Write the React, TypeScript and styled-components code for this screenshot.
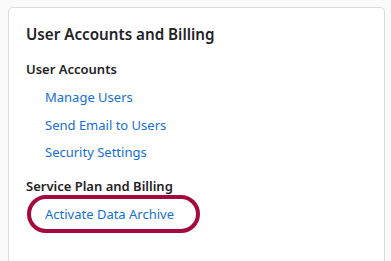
import React from "react";
import styled, { createGlobalStyle } from "styled-components";

const Global = createGlobalStyle`
  html, body { margin: 0; padding: 0; background: #fafafa; }
  body { font-family: "Noto Sans", "Open Sans", sans-serif; }
`;

const Page = styled.div`
  padding: 7px 6px 0 8px;
  height: 261px;
  box-sizing: border-box;
  overflow: hidden;
`;

const Card = styled.section`
  background: #ffffff;
  border: 1px solid #dcdcdc;
  border-radius: 5px;
  padding: 16px 17px 40px 17px;
  min-height: 280px;
  box-sizing: border-box;
`;

const Title = styled.h2`
  margin: 0 0 16px 0;
  font-size: 15.2px;
  line-height: 20px;
  font-weight: 600;
  color: #1f2226;
`;

const SectionHeading = styled.h3`
  margin: 0;
  font-size: 13px;
  line-height: 18px;
  font-weight: 600;
  color: #1f2226;
`;

const LinkList = styled.ul`
  list-style: none;
  margin: 0 0 16px 0;
  padding: 10px 0 0 19px;
  display: flex;
  flex-direction: column;
  gap: 9.5px;
`;

const LinkItem = styled.li`
  font-size: 13px;
  line-height: 18px;
`;

const Link = styled.a`
  color: #1470d2;
  text-decoration: none;
`;

const Highlight = styled.div`
  margin: 0 0 0 1px;
  width: 173px;
  height: 38px;
  box-sizing: border-box;
  border: 4px solid #a50a3d;
  border-radius: 19px;
  display: flex;
  align-items: center;
  padding-left: 14px;
  font-size: 13px;
  line-height: 18px;
`;

export default function App() {
  return (
    <>
      <Global />
      <Page>
        <Card>
          <Title>User Accounts and Billing</Title>
          <SectionHeading>User Accounts</SectionHeading>
          <LinkList>
            <LinkItem><Link href="#">Manage Users</Link></LinkItem>
            <LinkItem><Link href="#">Send Email to Users</Link></LinkItem>
            <LinkItem><Link href="#">Security Settings</Link></LinkItem>
          </LinkList>
          <SectionHeading>Service Plan and Billing</SectionHeading>
          <Highlight>
            <Link href="#">Activate Data Archive</Link>
          </Highlight>
        </Card>
      </Page>
    </>
  );
}
